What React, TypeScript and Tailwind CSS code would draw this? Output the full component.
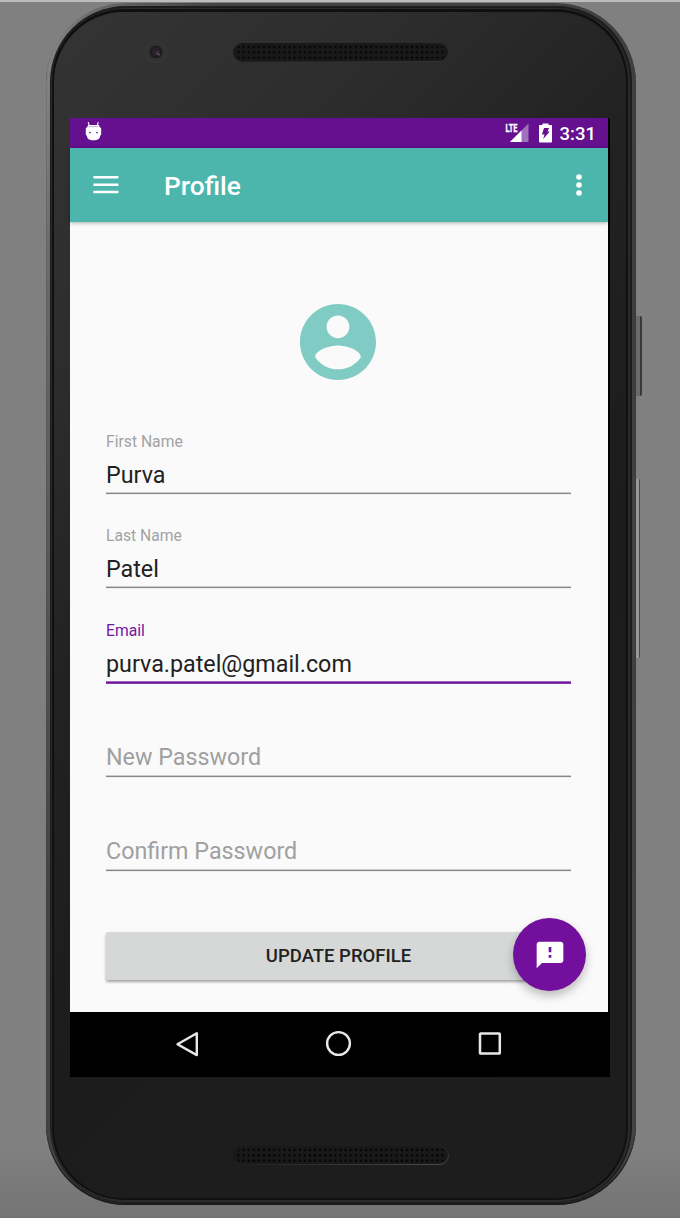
import React from "react";

function Grille({ id, dot, edge }: { id: string; dot: string; edge: string }) {
  return (
    <svg width="216" height="19" viewBox="0 0 216 19" className="block">
      <defs>
        <pattern id={id} width="5.1" height="5.4" x="3" y="1.3" patternUnits="userSpaceOnUse">
          <circle cx="2.5" cy="2.7" r="1.3" fill={dot} />
        </pattern>
        <linearGradient id={id + "-edge"} x1="0" y1="0" x2="1" y2="1">
          <stop offset="0.4" stopColor="#181818" />
          <stop offset="1" stopColor={edge} />
        </linearGradient>
      </defs>
      <rect x="0.5" y="0.5" width="215" height="18" rx="9" fill="#191919" stroke={`url(#${id}-edge)`} />
      <rect x="3" y="1.5" width="210" height="16.2" rx="8" fill={`url(#${id})`} />
    </svg>
  );
}

function Camera() {
  return (
    <svg width="24" height="24" viewBox="0 0 24 24" className="block">
      <circle cx="12" cy="12" r="11.3" fill="#373737" />
      <circle cx="12" cy="12" r="10" fill="#323232" />
      <circle cx="12" cy="12" r="6.4" fill="#1d1b1f" />
      <circle cx="12" cy="12" r="4.4" fill="#27222b" />
      <circle cx="13.6" cy="13.2" r="1.7" fill="#433a49" />
      <circle cx="15" cy="14.8" r="0.8" fill="#75707c" />
    </svg>
  );
}

function StatusBar() {
  return (
    <div className="flex h-[30px] w-[538px] items-center justify-between bg-[#65108f] pl-[15px] pr-3">
      <svg width="17" height="20" viewBox="0 0 17 20" fill="#fff" className="mb-[4px]">
        <path d="M3.2 1.2 4.2 4.5M13.2 1.2 12.4 4.5" stroke="#fff" strokeWidth="1.1" />
        <path d="M3 4h11l.7 2.2c1 .2 1.5.9 1.5 1.7v5c0 .9-.4 1.4-1.1 1.7C14.900 18 13 19.300 8.500 19.300s-6.400-1.300-6.600-4.700C1.200 14.300.8 13.800.8 12.900v-5c0-.8.5-1.500 1.500-1.700z" />
        <path d="M3.500 5.600h10" stroke="#c9a4dd" strokeWidth="0.9" />
        <circle cx="5" cy="11.600" r="0.8" fill="#65108f" />
        <circle cx="12" cy="11.600" r="0.8" fill="#65108f" />
      </svg>
      <div className="flex items-center">
        <svg width="25" height="24" viewBox="0 -4 25 24" className="mr-[9px] mb-[4px]">
          <path d="M23.500.5v18.500H5z" fill="#a071bc" />
          <path d="M16.500 7.500V19H5z" fill="#fff" />
          <path d="M0 0h13v10H0z" fill="#65108f" />
          <text x="0.500" y="9" fill="#fff" stroke="#fff" strokeWidth="0.300" fontSize="11" fontWeight="700" fontFamily="Roboto, sans-serif" textLength="12" lengthAdjust="spacingAndGlyphs">LTE</text>
        </svg>
        <svg width="13" height="20" viewBox="0 0 13 20" className="mr-[8px]">
          <path d="M3.500.5h6v1.500h2.500c.6 0 1 .4 1 1v15.500c0 .6-.4 1-1 1h-11c-.6 0-1-.4-1-1V3c0-.6.4-1 1-1h2.500z" fill="#fff" />
          <path d="M5 5h5L8.600 8.500h2.200L4.200 16l1.300-4.500H3z" fill="#65108f" />
        </svg>
        <span className="mt-px text-[18.500px] leading-[24px] font-medium text-white">3:31</span>
      </div>
    </div>
  );
}

function Toolbar() {
  return (
    <header className="relative z-10 flex h-[74px] w-[538px] items-center bg-[#4db6ac] pl-[23px] pr-[25px] text-white shadow-[0_1px_4px_rgba(0,0,0,0.3)]">
      <svg width="26" height="18" viewBox="0 0 26 18" fill="#fff">
        <path d="M.4 0h25v2.600H.4zM.4 7.400h25V10H.4zM.4 14.700h25v2.600H.4z" />
      </svg>
      <h1 className="mt-px ml-[45px] flex-1 text-[26.300px] leading-[32px] font-medium">Profile</h1>
      <svg width="8" height="24" viewBox="0 0 8 24" fill="#fff">
        <circle cx="4" cy="4" r="2.800" />
        <circle cx="4" cy="12" r="2.800" />
        <circle cx="4" cy="20" r="2.800" />
      </svg>
    </header>
  );
}

function Field({ label, value, focused }: { label: string; value?: string; focused?: boolean }) {
  return (
    <div className={focused ? "flex h-[95px] flex-col justify-end" : value ? "flex h-[94.500px] flex-col justify-end" : "flex h-[94px] flex-col justify-end"}>
      {value && (
        <span className={focused ? "text-[15.700px] leading-[20px] text-[#7216a3]" : "text-[15.700px] leading-[20px] text-[#a2a2a2]"}>
          {label}
        </span>
      )}
      <span className={value ? "mt-[8px] mb-[2px] text-[23.300px] leading-[30px] text-[#212121]" : "mb-[3px] text-[23.300px] leading-[30px] text-[#a0a0a0]"}>
        {value || label}
      </span>
      <svg width="465" height="3" className="block shrink-0">
        <rect y={focused ? 0.4 : 0.6} width="465" height={focused ? 2.4 : 1.5} fill={focused ? "#6c109c" : "#878787"} />
      </svg>
    </div>
  );
}

function ProfileForm() {
  return (
    <main className="relative flex h-[790px] w-[538px] flex-col bg-[#fafafa] px-9 pt-[74px]">
      <svg width="92" height="92" viewBox="-0.1 -0.1 24.2 24.2" fill="#80cbc4" className="ml-[186px] shrink-0">
        <path d="M12 2C6.480 2 2 6.480 2 12s4.480 10 10 10 10-4.480 10-10S17.520 2 12 2zm0 3c1.660 0 3 1.340 3 3s-1.340 3-3 3-3-1.340-3-3 1.340-3 3-3zm0 14.200c-2.500 0-4.710-1.280-6-3.220.03-1.990 4-3.080 6-3.080 1.990 0 5.970 1.090 6 3.080-1.290 1.940-3.500 3.220-6 3.220z" />
      </svg>
      <form className="mt-[12px] flex h-[580px] w-[465px] flex-col">
        <Field label="First Name" value="Purva" />
        <Field label="Last Name" value="Patel" />
        <Field label="Email" value="purva.patel@gmail.com" focused />
        <Field label="New Password" />
        <Field label="Confirm Password" />
        <button
          type="button"
          className="mt-auto h-[48px] rounded-[2px] bg-[#d6d7d7] pt-px text-[18.500px] font-medium text-[#212121] shadow-[0_2px_3px_rgba(0,0,0,0.35)]"
        >
          UPDATE PROFILE
        </button>
      </form>
      <button
        type="button"
        className="absolute right-[22px] bottom-[21px] flex size-[73px] items-center justify-center rounded-full bg-[#720f9c] shadow-[0_5px_10px_rgba(0,0,0,0.25)]"
      >
        <svg width="32" height="32" viewBox="0 0 24 24" fill="#fff">
          <path d="M20 2H4c-1.100 0-1.990.9-1.990 2L2 22l4-4h14c1.100 0 2-.9 2-2V4c0-1.100-.9-2-2-2zm-7 12h-2v-2h2v2zm0-4h-2V6h2v4z" />
        </svg>
      </button>
    </main>
  );
}

function NavBar() {
  return (
    <nav className="flex h-[65px] items-center bg-black pb-[2px] pl-[105px]">
      <svg width="24" height="28" viewBox="0 0 24 28" fill="none" stroke="#e8e8e8" strokeWidth="2.400" strokeLinejoin="round">
        <path d="M21.800 3.300v21.800L2.500 14.200z" />
      </svg>
      <svg width="28" height="28" viewBox="0 0 28 28" fill="none" stroke="#e8e8e8" strokeWidth="2.400" className="ml-[125px]">
        <circle cx="14.500" cy="13.500" r="11.400" />
      </svg>
      <svg width="26" height="26" viewBox="0 0 26 26" fill="none" stroke="#e8e8e8" strokeWidth="2.500" className="ml-[125px]">
        <rect x="3" y="2.600" width="19.800" height="20" rx="0.6" />
      </svg>
    </nav>
  );
}

export default function App() {
  return (
    <div className="flex h-[1218px] w-[680px] items-start overflow-hidden border-t-2 border-[#bdbdbd] bg-linear-to-b from-[#808080] from-94% to-[#747474] pt-px pl-[46px] font-[Roboto,sans-serif]">
      <div className="h-[1202px] w-[590px] shrink-0 rounded-[80px] bg-[linear-gradient(100deg,#8c8c8c_0%,#6a6a6a_6%,#454445_20%,#403e3f_80%,#454243_100%)] pt-[3px] pr-[4px] pb-[2px] pl-[4px] shadow-[inset_0_-2px_1px_#191919]">
        <div className="h-full rounded-[76px] bg-[#1c1c1c] pt-[2px] pr-[2px] pb-px pl-px">
          <div className="h-full rounded-[74px] bg-[#2c2b2c] pt-px pr-[2px] pb-[2px] pl-px">
            <div className="h-full rounded-[72px] bg-[#101010] pt-[3px] pr-[2px] pb-[2px] pl-[2px]">
              <div className="flex h-full flex-col rounded-[70px] bg-[linear-gradient(135deg,#343435_0%,#2d2d2e_20%,#222222_38%,#1c1c1c_60%,#1d1d1d_100%)] pl-4">
                <div className="flex h-[106px] shrink-0 pt-[28px] pl-[74px]">
                  <Camera />
                  <div className="mt-[3px] ml-[65px]">
                    <Grille id="speaker-top" dot="#060606" edge="#343434" />
                  </div>
                </div>
                <div className="h-[959px] w-[540px] shrink-0 rounded-[2px] bg-black">
                  <StatusBar />
                  <Toolbar />
                  <ProfileForm />
                  <NavBar />
                </div>
                <div className="pt-[69px] pl-[163px]">
                  <Grille id="speaker-bottom" dot="#040404" edge="#4a4a4a" />
                </div>
              </div>
            </div>
          </div>
        </div>
      </div>
      <div className="flex flex-col pt-[313px]">
        <div className="h-[80px] w-[6px] rounded-r-[2px] border-r-2 border-[#383838] bg-[#6b6969]" />
        <div className="mt-[83px] h-[179px] w-[4px] rounded-r-[1px] border-r border-[#484848] bg-[#989898]" />
      </div>
    </div>
  );
}
